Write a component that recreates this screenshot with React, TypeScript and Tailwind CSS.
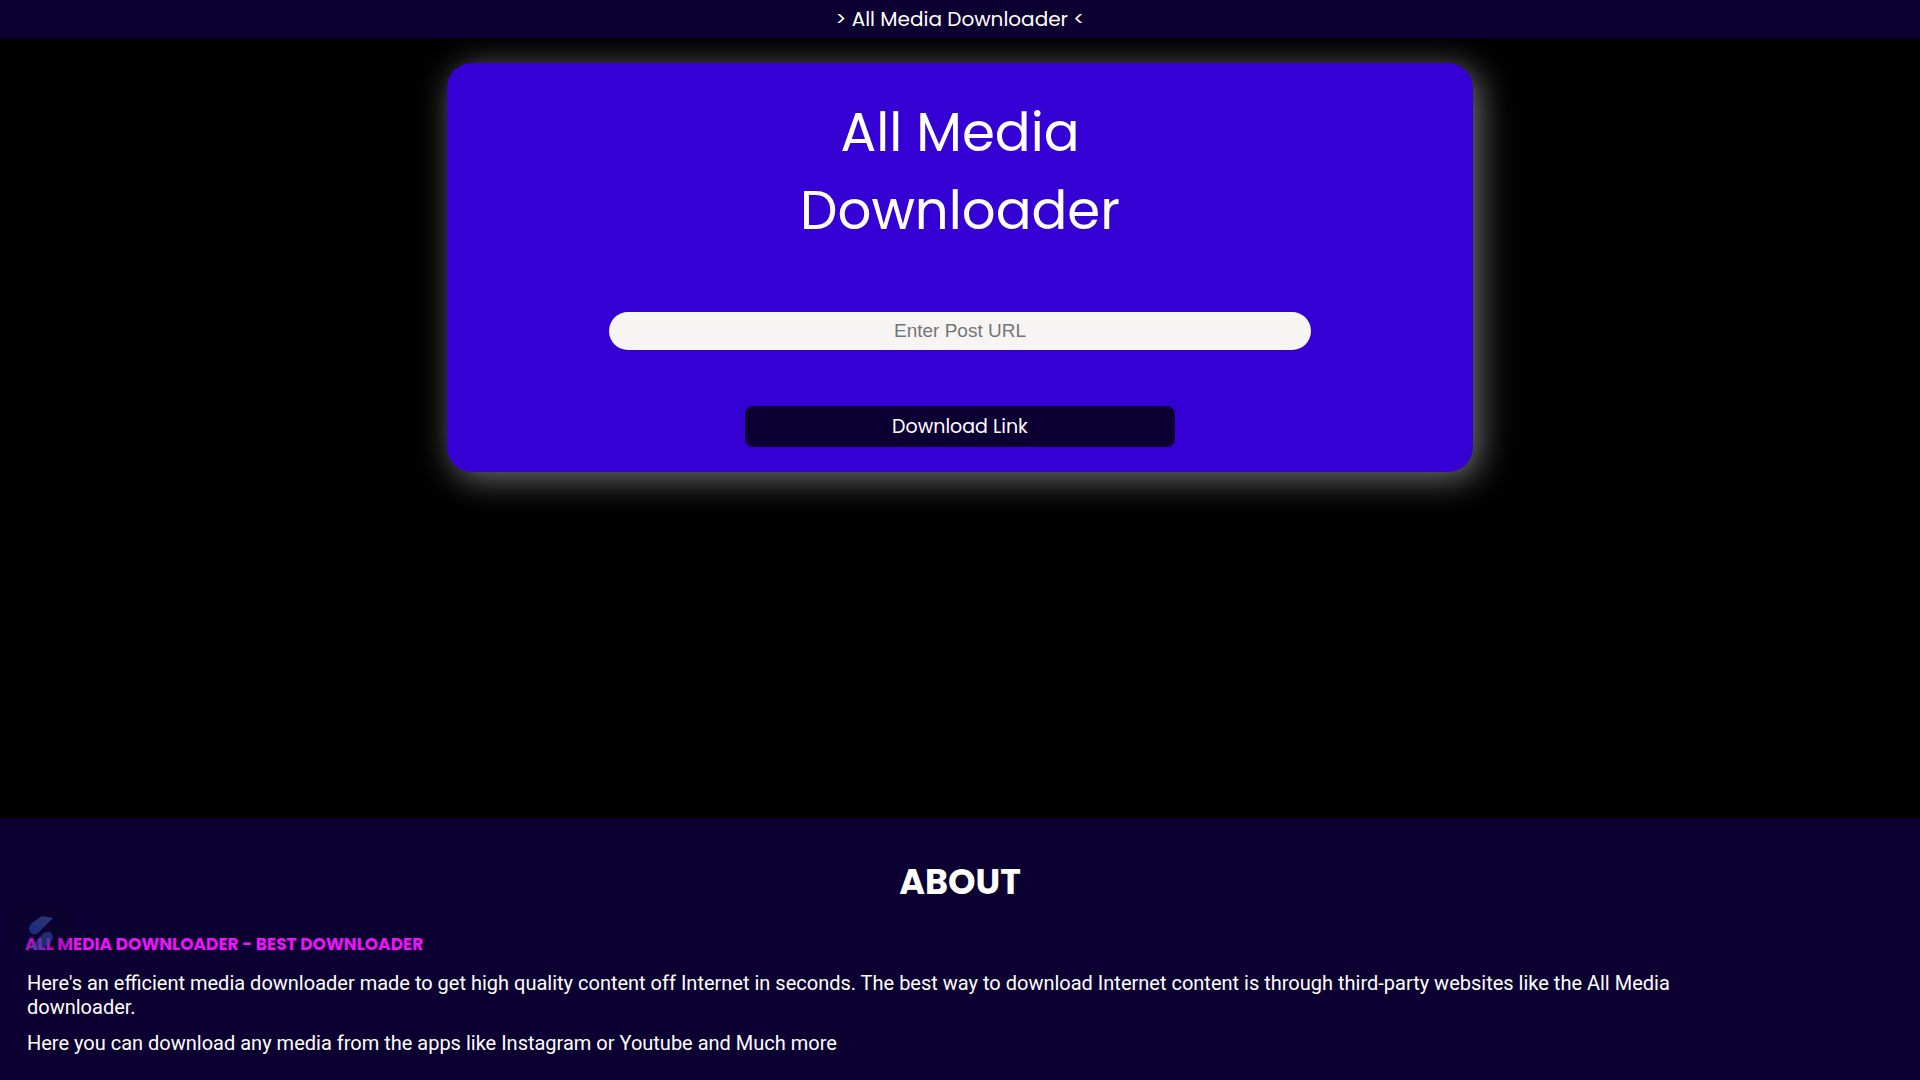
export default function App() {
  return (
    <div className="flex min-h-screen flex-col bg-black text-white">
      <header className="relative z-10 bg-[#0c0032] py-1 text-center font-['Poppins','Inter',sans-serif] text-xl leading-[30px]">
        &gt; All Media Downloader &lt;
      </header>

      <main className="grow px-7 pt-[25px] pb-24">
        <form
          className="mx-auto flex w-[55%] flex-col items-center rounded-[25px] bg-[#3500d3] pt-[31px] pb-[25px] shadow-[6px_6px_35px_#747474]"
          onSubmit={(e) => e.preventDefault()}
        >
          <h1 className="text-center font-['Poppins','Inter',sans-serif] text-[53px] leading-[78px]">
            All Media
            <br />
            Downloader
          </h1>
          <input
            type="url"
            aria-label="Enter Post URL"
            placeholder="Enter Post URL"
            className="mt-[62px] h-[38px] w-[68.5%] rounded-full bg-[#f6f5f4] px-4 text-center font-['Liberation_Sans',sans-serif] text-[19px] text-black placeholder:text-[#757575]"
          />
          <button
            type="submit"
            className="mt-14 h-[41px] w-[42%] rounded-lg bg-[#0c0032] pt-0.5 font-['Poppins','Inter',sans-serif] text-[19px]"
          >
            Download Link
          </button>
        </form>
      </main>

      <section className="relative bg-[#0c0032] px-[25px] pt-[37px] pb-[25px]">
        <h2 className="text-center font-['Poppins','Inter',sans-serif] text-[35px] leading-[54px] font-bold">ABOUT</h2>
        <h3 className="mt-[23px] font-['Poppins','Inter',sans-serif] text-[17px] leading-6 font-bold text-[#e815f5]">
          ALL MEDIA DOWNLOADER - BEST DOWNLOADER
        </h3>
        <p className="mt-[15px] w-[91%] pl-0.5 font-['Roboto',sans-serif] text-xl leading-6">
          Here's an efficient media downloader made to get high quality content off Internet in seconds. The best way to
          download Internet content is through third-party websites like the All Media downloader.
        </p>
        <p className="mt-3 w-[91%] pl-0.5 font-['Roboto',sans-serif] text-xl leading-6">
          Here you can download any media from the apps like Instagram or Youtube and Much more
        </p>
        <div className="absolute bottom-[118px] left-3 h-[60px] w-[58px] rounded-2xl bg-[#0a0628]/25" aria-hidden="true">
          <svg viewBox="0 0 58 60" className="h-full w-full">
            <defs>
              <linearGradient id="upper" x1="1" y1="0" x2="0" y2="1">
                <stop offset="0" stopColor="#34407c" />
                <stop offset="1" stopColor="#1b3390" />
              </linearGradient>
              <linearGradient id="lower" x1="0" y1="0" x2="1" y2="1">
                <stop offset="0" stopColor="#2446b4" />
                <stop offset="1" stopColor="#3f4c88" />
              </linearGradient>
            </defs>
            <path d="M30 14L41 16L26 31Q23 33 20 32Q17 30 17 27Q17 24 20 21Z" fill="url(#upper)" opacity=".85" />
            <path
              d="M30 14L41 16L26 31Q23 33 20 32Q17 30 17 27Q17 24 20 21Z"
              transform="rotate(180 29 31)"
              fill="url(#lower)"
              opacity=".6"
            />
          </svg>
        </div>
      </section>
    </div>
  );
}
